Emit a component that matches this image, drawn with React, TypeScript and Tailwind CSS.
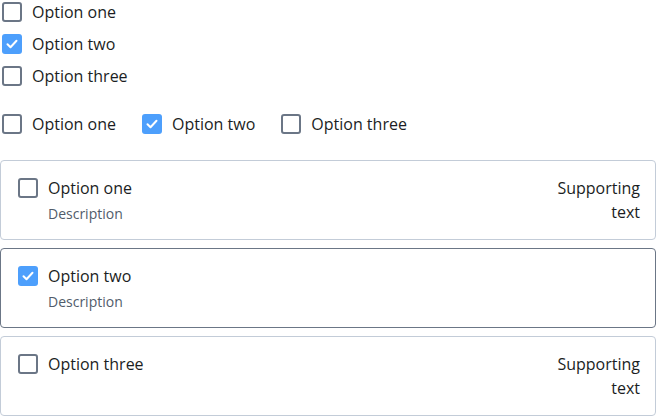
import React from 'react';

interface BoxProps {
  checked?: boolean;
}

function Box({ checked = false }: BoxProps) {
  return (
    <span className="flex h-6 w-6 shrink-0 items-center justify-center">
      {checked ? (
        <span className="flex h-5 w-5 items-center justify-center rounded-[3px] bg-[#4d9ffc]">
          <svg viewBox="0 0 20 20" className="h-5 w-5" fill="none">
            <path d="M5.5 10.2l3 3 6-6.4" stroke="white" strokeWidth="2" strokeLinecap="round" strokeLinejoin="round" />
          </svg>
        </span>
      ) : (
        <span className="h-5 w-5 rounded-[3px] border-2 border-[#6b7686] bg-white" />
      )}
    </span>
  );
}

function Option({ label, checked }: { label: string; checked?: boolean }) {
  return (
    <label className="flex h-6 items-center gap-2">
      <Box checked={checked} />
      <span className="text-base leading-6 text-[#1b1e23]">{label}</span>
    </label>
  );
}

interface CardProps {
  label: string;
  description?: string;
  supporting?: string;
  checked?: boolean;
}

function Card({ label, description, supporting, checked }: CardProps) {
  return (
    <div
      className={
        'flex h-20 items-start justify-between rounded border px-[15px] py-[15px] ' +
        (checked ? 'border-[#6b7686]' : 'border-[#c3ccd8]')
      }
    >
      <div className="flex gap-2">
        <Box checked={checked} />
        <div className="flex flex-col gap-1">
          <span className="text-base leading-6 text-[#1b1e23]">{label}</span>
          {description && <span className="text-sm leading-5 text-[#515c6b]">{description}</span>}
        </div>
      </div>
      {supporting && (
        <span className="w-[90px] text-right text-base leading-6 text-[#1b1e23]">{supporting}</span>
      )}
    </div>
  );
}

export default function App() {
  return (
    <div className="flex w-[656px] flex-col bg-white" style={{ fontFamily: '"Open Sans", sans-serif' }}>
      <div className="flex flex-col gap-2">
        <Option label="Option one" />
        <Option label="Option two" checked />
        <Option label="Option three" />
      </div>
      <div className="mt-6 flex gap-6">
        <Option label="Option one" />
        <Option label="Option two" checked />
        <Option label="Option three" />
      </div>
      <div className="mt-6 flex flex-col gap-2">
        <Card label="Option one" description="Description" supporting="Supporting text" />
        <Card label="Option two" description="Description" checked />
        <Card label="Option three" supporting="Supporting text" />
      </div>
    </div>
  );
}
